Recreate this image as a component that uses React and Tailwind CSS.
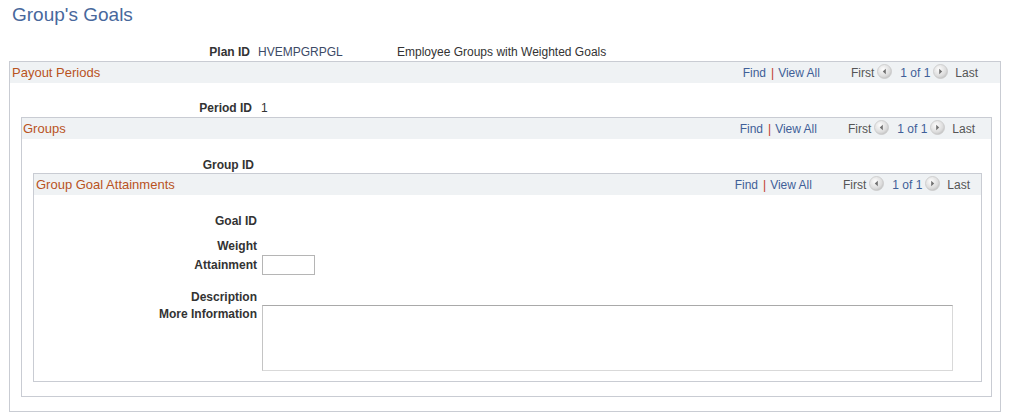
import { useId } from 'react';

const FONT = { fontFamily: '"Liberation Sans", Arial, sans-serif' };

function NavButton({ dir }) {
  const id = useId().replace(/:/g, '');
  return (
    <svg width="15" height="15" viewBox="0 0 15 15" className="shrink-0 -mt-[3px]">
      <defs>
        <radialGradient id={id} cx="40%" cy="35%" r="70%">
          <stop offset="0%" stopColor="#fdfdfd" />
          <stop offset="70%" stopColor="#dcdcdc" />
          <stop offset="100%" stopColor="#bdbdbd" />
        </radialGradient>
      </defs>
      <circle cx="7.5" cy="7.5" r="7" fill={`url(#${id})`} stroke="#c9c9c9" strokeWidth="0.8" />
      {dir === 'prev' ? (
        <path d="M8.8 4.8 L5.8 7.5 L8.8 10.2 Z" fill="#707070" />
      ) : (
        <path d="M6.2 4.8 L9.2 7.5 L6.2 10.2 Z" fill="#707070" />
      )}
    </svg>
  );
}

function Navigator({ pr }) {
  return (
    <div className={`flex items-center text-[12px] ${pr}`}>
      <span className="text-[#3f5f98]">Find</span>
      <span className="text-[#c0392b] ml-[5px]">|</span>
      <span className="text-[#3f5f98] ml-[4px]">View All</span>
      <span className="text-[#555] ml-[31px]">First</span>
      <span className="ml-[3px] flex"><NavButton dir="prev" /></span>
      <span className="text-[#3f5f98] ml-[8px]">1 of 1</span>
      <span className="ml-[3px] flex"><NavButton dir="next" /></span>
      <span className="text-[#555] ml-[7px]">Last</span>
    </div>
  );
}

function ScrollArea({ title, titlePl, navPr, children, className }) {
  return (
    <div className={`border border-[#c9ccd3] ${className}`}>
      <div className="h-[21px] bg-[#eff2f4] flex items-center justify-between">
        <span className={`text-[13px] text-[#b9531e] ${titlePl}`}>{title}</span>
        <Navigator pr={navPr} />
      </div>
      {children}
    </div>
  );
}

function Field({ label, labelW, gap, children, className = '' }) {
  return (
    <div className={`flex items-center h-[14px] ${className}`}>
      <span className="font-bold text-right text-[#333] shrink-0" style={{ width: labelW }}>
        {label}
      </span>
      <span style={{ marginLeft: gap }} className="text-[#333]">{children}</span>
    </div>
  );
}

export default function App() {
  return (
    <div className="w-[1009px] h-[417px] bg-white text-[12px] text-[#333] overflow-hidden" style={FONT}>
      <h1 className="h-[31px] flex items-center pl-[12px] text-[19px] text-[#48689c] font-normal">
        Group's Goals
      </h1>

      {/* plan header */}
      <div className="flex items-center h-[14px] mt-[14px]">
        <span className="w-[250px] text-right font-bold shrink-0">Plan ID</span>
        <span className="ml-[8px] w-[139px] text-[#3c4a66]">HVEMPGRPGL</span>
        <span className="text-[#333]">Employee Groups with Weighted Goals</span>
      </div>

      <ScrollArea
        title="Payout Periods"
        titlePl="pl-[2px]"
        navPr="pr-[22px]"
        className="mt-[2px] ml-[9px] w-[992px] pb-[14px]"
      >
        <Field label="Period ID" labelW="242px" gap="9px" className="mt-[18px]">1</Field>

        <ScrollArea
          title="Groups"
          titlePl="pl-[1px]"
          navPr="pr-[16px]"
          className="mt-[2px] ml-[11px] w-[971px] pb-[14px]"
        >
          <Field label="Group ID" labelW="232px" gap="9px" className="mt-[19px]" />

          <ScrollArea
            title="Group Goal Attainments"
            titlePl="pl-[2px]"
            navPr="pr-[11px]"
            className="mt-[1px] ml-[11px] w-[949px] pb-[10px]"
          >
            <div className="flex flex-col">
              <Field label="Goal ID" labelW="223px" gap="5px" className="mt-[19px]" />
              <Field label="Weight" labelW="223px" gap="5px" className="mt-[11px]" />
              <div className="flex items-center mt-[2px]">
                <span className="w-[223px] text-right font-bold shrink-0">Attainment</span>
                <input
                  type="text"
                  className="ml-[5px] w-[53px] h-[20px] border border-[#b5b5b5] bg-white outline-none"
                />
              </div>
              <Field label="Description" labelW="223px" gap="5px" className="mt-[15px]" />
              <div className="flex items-start mt-[1px]">
                <span className="w-[223px] text-right font-bold shrink-0 mt-[2px] leading-[14px]">
                  More Information
                </span>
                <textarea
                  className="ml-[5px] w-[691px] h-[66px] resize-none border border-[#d9d9d9] border-t-[#a9a9a9] border-l-[#c4c4c4] bg-white outline-none"
                />
              </div>
            </div>
          </ScrollArea>
        </ScrollArea>
      </ScrollArea>
    </div>
  );
}
